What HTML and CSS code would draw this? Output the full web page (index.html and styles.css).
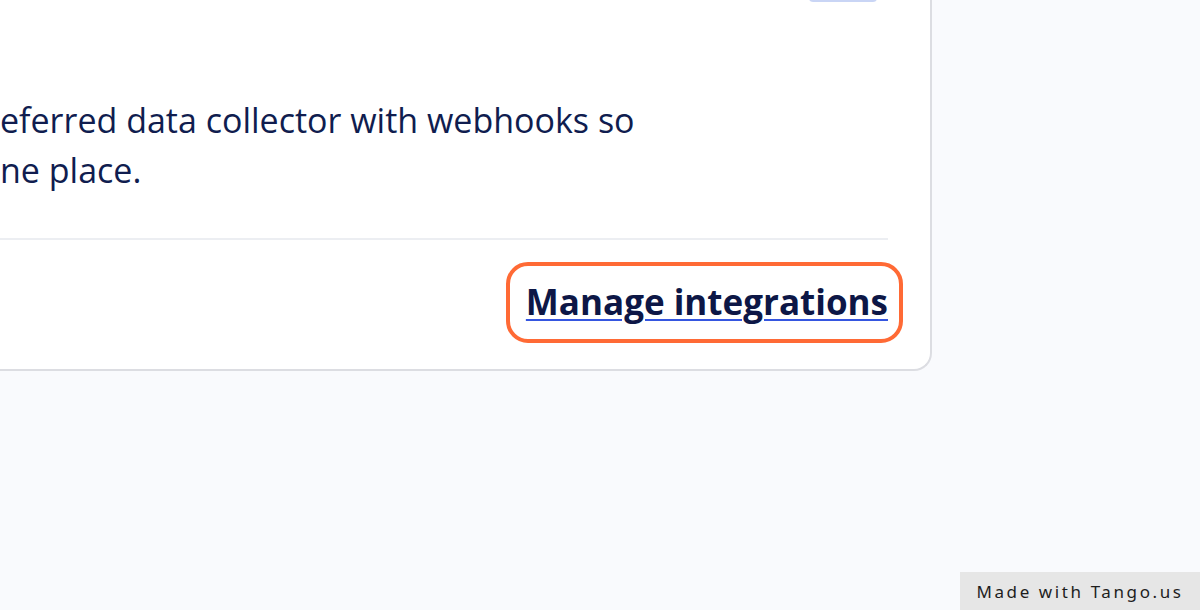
FILE: index.html
```html
<!DOCTYPE html>
<html>
<head>
<meta charset="utf-8">
<link rel="stylesheet" href="styles.css">
</head>
<body>
<div class="page">
  <section class="card">
    <div class="card-top">
      <span class="top-button"></span>
    </div>
    <p class="desc">eferred data collector with webhooks so<br>ne place.</p>
    <div class="card-footer">
      <span class="highlight"><a class="manage-link" href="#">Manage integrations</a></span>
    </div>
  </section>
</div>
<div class="tango-badge">Made with Tango.us</div>
</body>
</html>
```

FILE: styles.css
```css
html, body {
  margin: 0;
  padding: 0;
  background: #f9fafd;
  width: 1200px;
  height: 610px;
  overflow: hidden;
  font-family: "Open Sans", "Noto Sans", sans-serif;
}

.page {
  display: flex;
}

.card {
  box-sizing: border-box;
  width: 932px;
  margin-top: -30px;
  background: #ffffff;
  border: 2px solid #dcdde2;
  border-top: none;
  border-left: none;
  border-bottom-right-radius: 18px;
  padding: 0 42px 26px 0;
  display: flex;
  flex-direction: column;
}

.card-top {
  display: flex;
  justify-content: flex-end;
  height: 32px;
}

.top-button {
  display: block;
  width: 68px;
  height: 32px;
  margin-right: 11px;
  background: #c9d5f5;
  border-radius: 0 0 4px 4px;
}

.desc {
  margin: 93px 0 0 0;
  font-size: 34px;
  line-height: 50px;
  color: #101d4f;
  white-space: nowrap;
}

.card-footer {
  margin-top: 43px;
  border-top: 2px solid #eceef2;
  display: flex;
  justify-content: flex-end;
  padding-top: 22px;
}

.highlight {
  display: inline-flex;
  align-items: center;
  margin-right: -15px;
  padding: 12px 11px 13px 16px;
  border: 4px solid #ff6a35;
  border-radius: 22px;
}

.manage-link {
  font-size: 35px;
  font-weight: 700;
  color: #0d1746;
  text-decoration: underline;
  text-decoration-color: #3556e0;
  text-decoration-thickness: 2px;
  text-underline-offset: 4px;
  line-height: 48px;
}

.tango-badge {
  position: absolute;
  right: 0;
  bottom: 0;
  width: 240px;
  height: 38px;
  box-sizing: border-box;
  background: #e6e6e6;
  color: #1e1e1e;
  font-family: "Noto Sans", sans-serif;
  font-size: 17px;
  letter-spacing: 2.6px;
  display: flex;
  align-items: center;
  justify-content: center;
}
```
